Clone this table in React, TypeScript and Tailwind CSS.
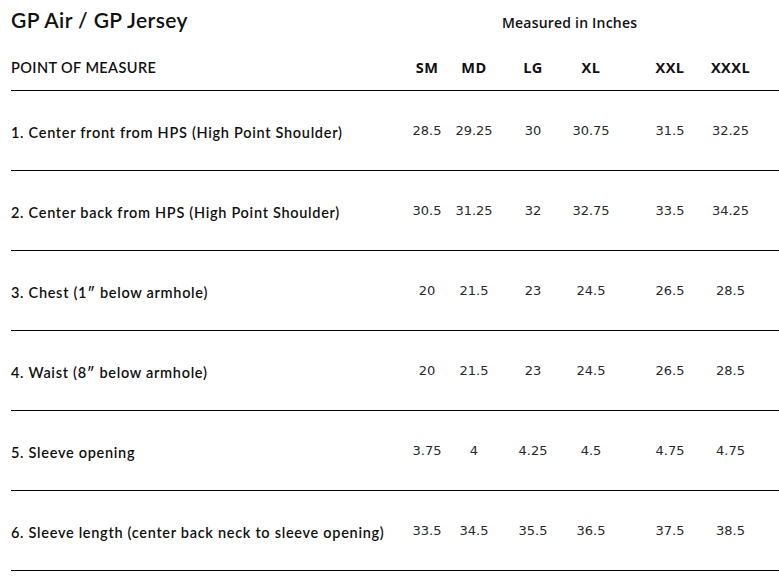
import React from "react";

const sizes = ["SM", "MD", "LG", "XL", "XXL", "XXXL"];

const rows: { label: string; values: string[] }[] = [
  { label: "1. Center front from HPS (High Point Shoulder)", values: ["28.5", "29.25", "30", "30.75", "31.5", "32.25"] },
  { label: "2. Center back from HPS (High Point Shoulder)", values: ["30.5", "31.25", "32", "32.75", "33.5", "34.25"] },
  { label: "3. Chest (1\u2033 below armhole)", values: ["20", "21.5", "23", "24.5", "26.5", "28.5"] },
  { label: "4. Waist (8\u2033 below armhole)", values: ["20", "21.5", "23", "24.5", "26.5", "28.5"] },
  { label: "5. Sleeve opening", values: ["3.75", "4", "4.25", "4.5", "4.75", "4.75"] },
  { label: "6. Sleeve length (center back neck to sleeve opening)", values: ["33.5", "34.5", "35.5", "36.5", "37.5", "38.5"] },
];

const gridCols = "grid grid-cols-[393px_46px_48px_70px_46px_86px_61px_1fr]";

function Cell({ i, children, className }: { i: number; children: React.ReactNode; className: string }) {
  return (
    <div className={`flex justify-center whitespace-nowrap ${i === 4 ? "pl-[26px]" : ""} ${className}`}>
      {children}
    </div>
  );
}

export default function App() {
  return (
    <div className="w-[779px] h-[583px] bg-white pl-[11px] overflow-hidden">
      <div className="flex h-[40px] items-start">
        <div className="w-[393px] pt-[6px] text-[21px] leading-[28px] font-semibold text-[#111] font-['Lato',sans-serif] tracking-[0.4px]">
          GP Air / GP Jersey
        </div>
        <div className="ml-[98px] pt-[13px] text-[14px] leading-[20px] font-semibold text-[#111] font-['Open_Sans',sans-serif] tracking-[0.2px]">
          Measured in Inches
        </div>
      </div>
      <div className={`${gridCols} h-[51px] items-center border-b border-black`}>
        <div className="pt-[5px] text-[14.5px] font-semibold text-[#111] font-['Lato',sans-serif] tracking-[0.4px]">
          POINT OF MEASURE
        </div>
        {sizes.map((s, i) => (
          <Cell key={s} i={i} className="pt-[5px] text-[14.5px] font-bold text-[#111] font-['Open_Sans',sans-serif] tracking-[0.5px]">
            {s}
          </Cell>
        ))}
        <div />
      </div>
      {rows.map((r) => (
        <div key={r.label} className={`${gridCols} h-[80px] items-center border-b border-black`}>
          <div className="pt-[4px] text-[14.5px] font-semibold text-[#111] font-['Lato',sans-serif] tracking-[0.7px] whitespace-nowrap">
            {r.label}
          </div>
          {r.values.map((v, i) => (
            <Cell key={i} i={i} className="text-[13px] text-[#2a2a2a] font-['DejaVu_Sans',sans-serif]">
              {v}
            </Cell>
          ))}
          <div />
        </div>
      ))}
    </div>
  );
}
